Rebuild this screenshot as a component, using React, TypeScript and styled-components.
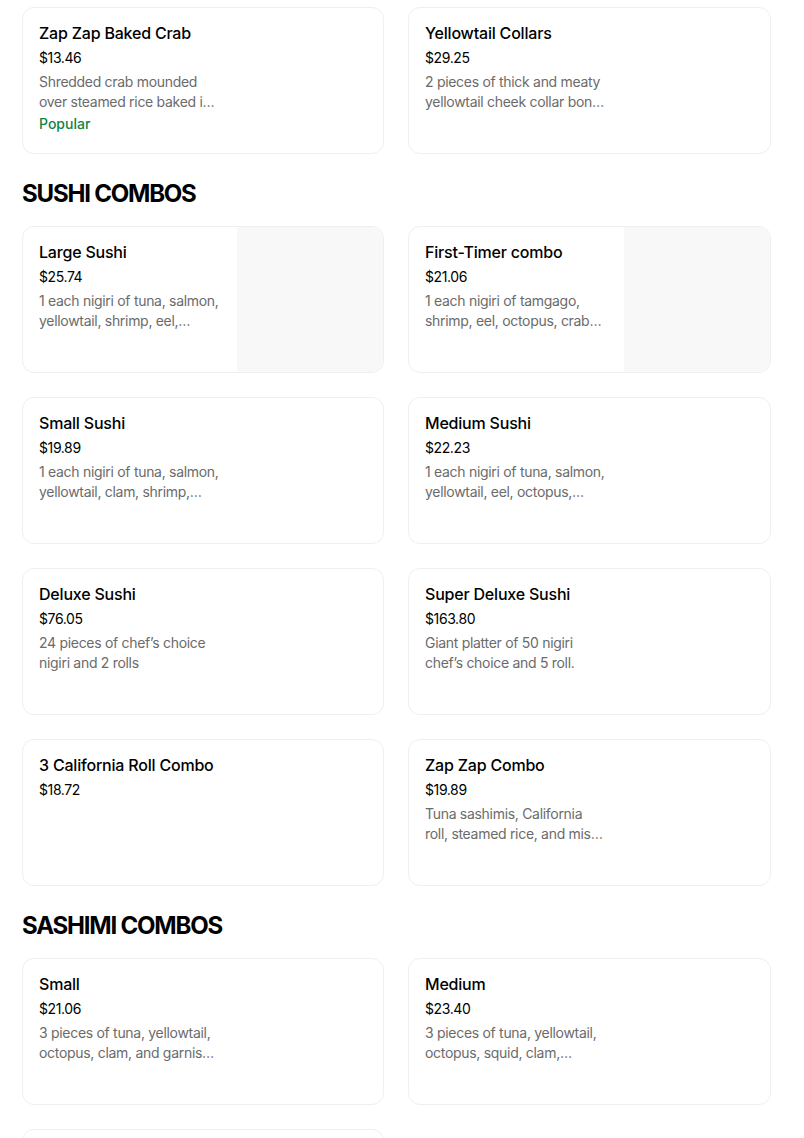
import React from "react";
import styled, { createGlobalStyle } from "styled-components";

const Global = createGlobalStyle`
  html, body { margin: 0; padding: 0; background: #ffffff; }
  body { font-family: Inter, "Noto Sans", "Liberation Sans", sans-serif; color: #000; }
  * { box-sizing: border-box; }
`;

const Page = styled.div`
  padding: 7px 33px 0 22px;
  display: flex;
  flex-direction: column;
`;

const Section = styled.section`
  display: flex;
  flex-direction: column;
`;

const Heading = styled.h2`
  margin: 24px 0 16px;
  font-size: 24px;
  line-height: 32px;
  font-weight: 700;
  letter-spacing: -1.2px;
  color: #000;
`;

const Grid = styled.div`
  display: grid;
  grid-template-columns: 362px 363px;
  column-gap: 24px;
  row-gap: 24px;
`;

const Card = styled.div`
  height: 147px;
  border: 1px solid #efefef;
  border-radius: 12px;
  display: flex;
  overflow: hidden;
  background: #fff;
`;

const Info = styled.div`
  flex: 1;
  padding: 15px 16px 16px 16px;
  display: flex;
  flex-direction: column;
  min-width: 0;
`;

const Title = styled.div`
  font-size: 16px;
  line-height: 20px;
  font-weight: 500;
  color: #000;
  letter-spacing: -0.2px;
`;

const Price = styled.div`
  margin-top: 5px;
  font-size: 14px;
  line-height: 20px;
  color: #000;
  letter-spacing: -0.4px;
`;

const Desc = styled.div`
  margin-top: 4px;
  width: 182px;
  font-size: 14px;
  line-height: 20px;
  letter-spacing: -0.3px;
  color: #6b6b6b;
  display: -webkit-box;
  -webkit-line-clamp: 2;
  -webkit-box-orient: vertical;
  overflow: hidden;
`;

const Tag = styled.div`
  margin-top: 2px;
  font-size: 14px;
  line-height: 20px;
  font-weight: 500;
  color: #0e8345;
`;

const Thumb = styled.div`
  width: 146px;
  flex-shrink: 0;
  background: #f8f8f8;
`;

type Item = { title: string; price: string; desc?: string; tag?: string; image?: boolean };

const top: Item[] = [
  { title: "Zap Zap Baked Crab", price: "$13.46", desc: "Shredded crab mounded over steamed rice baked in a creamy sauce with eel sauce", tag: "Popular" },
  { title: "Yellowtail Collars", price: "$29.25", desc: "2 pieces of thick and meaty yellowtail cheek collar bones grilled" },
];

const sushi: Item[] = [
  { title: "Large Sushi", price: "$25.74", desc: "1 each nigiri of tuna, salmon, yellowtail, shrimp, eel, octopus and more", image: true },
  { title: "First-Timer combo", price: "$21.06", desc: "1 each nigiri of tamgago, shrimp, eel, octopus, crab stick and more", image: true },
  { title: "Small Sushi", price: "$19.89", desc: "1 each nigiri of tuna, salmon, yellowtail, clam, shrimp, octopus, and more" },
  { title: "Medium Sushi", price: "$22.23", desc: "1 each nigiri of tuna, salmon, yellowtail, eel, octopus, shrimp, and more" },
  { title: "Deluxe Sushi", price: "$76.05", desc: "24 pieces of chef\u2019s choice nigiri and 2 rolls" },
  { title: "Super Deluxe Sushi", price: "$163.80", desc: "Giant platter of 50 nigiri chef\u2019s choice and 5 roll." },
  { title: "3 California Roll Combo", price: "$18.72" },
  { title: "Zap Zap Combo", price: "$19.89", desc: "Tuna sashimis, California roll, steamed rice, and miso soup" },
];

const sashimi: Item[] = [
  { title: "Small", price: "$21.06", desc: "3 pieces of tuna, yellowtail, octopus, clam, and garnish on the side" },
  { title: "Medium", price: "$23.40", desc: "3 pieces of tuna, yellowtail, octopus, squid, clam, scallop, and garnish" },
  { title: "Large", price: "$29.25", desc: "3 pieces of tuna, yellowtail, salmon, octopus, squid, clam" },
];

const ItemCard = ({ item }: { item: Item }) => (
  <Card>
    <Info>
      <Title>{item.title}</Title>
      <Price>{item.price}</Price>
      {item.desc && <Desc>{item.desc}</Desc>}
      {item.tag && <Tag>{item.tag}</Tag>}
    </Info>
    {item.image && <Thumb />}
  </Card>
);

export default function App() {
  return (
    <>
      <Global />
      <Page>
        <Grid>
          {top.map((it) => (
            <ItemCard key={it.title} item={it} />
          ))}
        </Grid>
        <Section>
          <Heading>SUSHI COMBOS</Heading>
          <Grid>
            {sushi.map((it) => (
              <ItemCard key={it.title} item={it} />
            ))}
          </Grid>
        </Section>
        <Section>
          <Heading>SASHIMI COMBOS</Heading>
          <Grid>
            {sashimi.map((it) => (
              <ItemCard key={it.title} item={it} />
            ))}
          </Grid>
        </Section>
      </Page>
    </>
  );
}
